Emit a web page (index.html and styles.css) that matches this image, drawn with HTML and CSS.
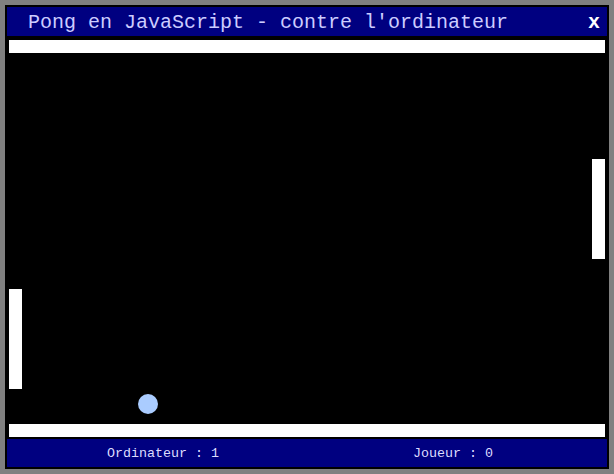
FILE: index.html
```html
<!DOCTYPE html>
<html lang="fr">
<head>
<meta charset="utf-8">
<title>Pong</title>
<link rel="stylesheet" href="styles.css">
</head>
<body>
<div class="window">
  <div class="title">
    <span class="title-text">Pong en JavaScript - contre l'ordinateur</span>
    <span class="close">x</span>
  </div>
  <div class="field">
    <div class="wall"></div>
    <div class="play">
      <div class="paddle paddle-left"></div>
      <div class="paddle paddle-right"></div>
      <div class="ball"></div>
    </div>
    <div class="wall"></div>
  </div>
  <div class="footer">
    <span class="score score-cpu">Ordinateur : 1</span>
    <span class="score score-player">Joueur : 0</span>
  </div>
</div>
</body>
</html>
```
FILE: styles.css
```css
html, body {
  margin: 0;
  padding: 0;
}
body {
  background: #808080;
  padding: 5px;
  font-family: "Liberation Mono", "Courier New", monospace;
}
.window {
  width: 600px;
  border: 2px solid #000;
  background: #000;
}
.title {
  height: 26px;
  padding: 3px 7px 0 21px;
  background: #000080;
  display: flex;
  justify-content: space-between;
  align-items: flex-start;
  line-height: 26px;
  font-size: 20px;
}
.title-text {
  color: #ccccff;
  white-space: pre;
}
.close {
  color: #ffffff;
  font-weight: bold;
}
.field {
  padding: 4px 2px 2px;
}
.wall {
  height: 13px;
  background: #ffffff;
}
.play {
  position: relative;
  height: 371px;
  background: #000;
}
.paddle {
  position: absolute;
  width: 13px;
  height: 100px;
  background: #ffffff;
}
.paddle-left {
  left: 0;
  top: 236px;
}
.paddle-right {
  right: 0;
  top: 106px;
}
.ball {
  position: absolute;
  left: 129px;
  top: 341px;
  width: 20px;
  height: 20px;
  border-radius: 50%;
  background: #aaccff;
}
.footer {
  height: 27px;
  padding-top: 1px;
  background: #000080;
  display: flex;
  align-items: center;
  font-size: 13.33px;
  line-height: 27px;
  color: #ddddff;
}
.score-cpu {
  margin-left: 100px;
}
.score-player {
  margin-left: 194px;
}
```
